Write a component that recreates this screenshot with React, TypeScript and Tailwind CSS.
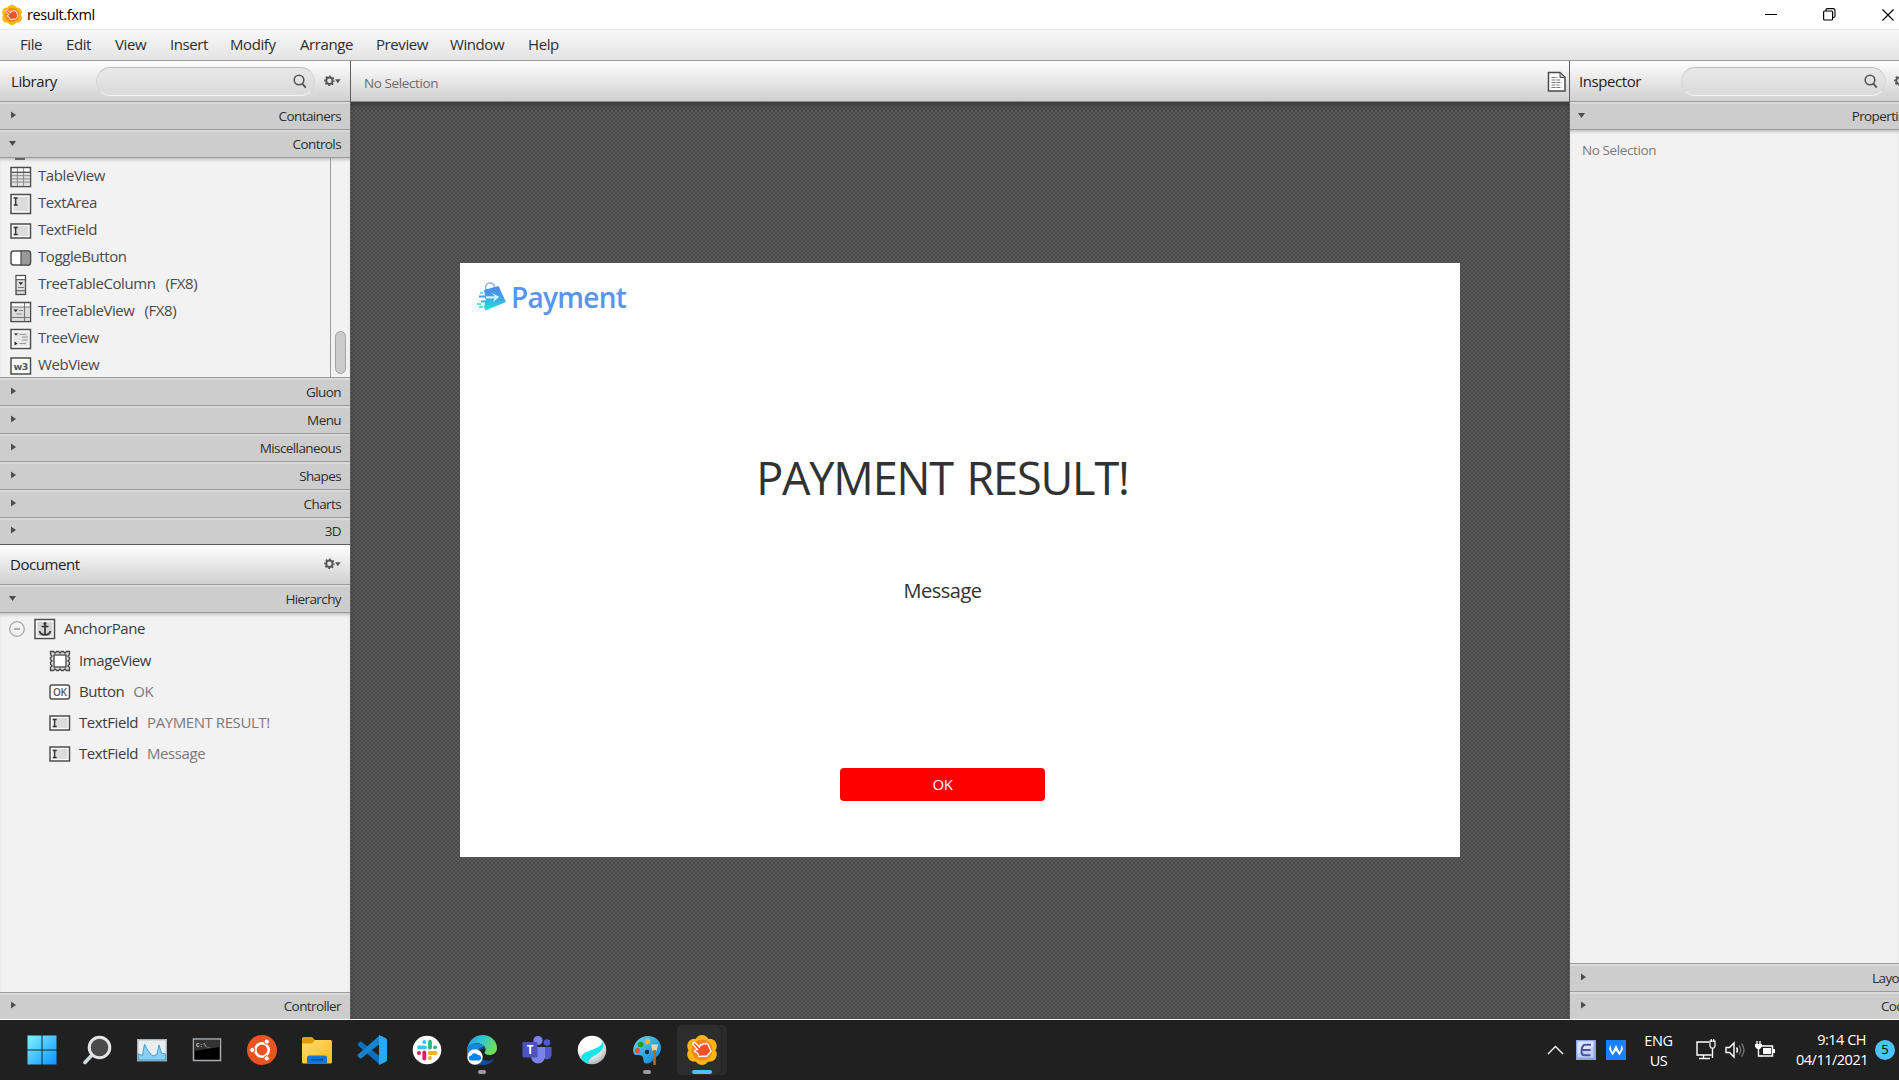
import React from "react";

type Kids = { children?: React.ReactNode };

const menus: [string, string][] = [
  ["File", "w-[46px]"],
  ["Edit", "w-[49px]"],
  ["View", "w-[55px]"],
  ["Insert", "w-[60px]"],
  ["Modify", "w-[70px]"],
  ["Arrange", "w-[76px]"],
  ["Preview", "w-[74px]"],
  ["Window", "w-[78px]"],
  ["Help", "w-[40px]"],
];

function Section({ label, open = false, last = false, wide = false }: { label: string; open?: boolean; last?: boolean; wide?: boolean }) {
  return (
    <div
      className={`flex shrink-0 items-center justify-between border-t border-[#9b9b9b] bg-[#cdcdcd] shadow-[inset_0_2px_0_#dadada] ${
        last ? "h-[27px]" : "h-7"
      } ${wide ? "w-[350px]" : "w-full"}`}
    >
      {open ? (
        <svg className={wide ? "ml-2" : "ml-[9px]"} width="8" height="8" viewBox="0 0 8 8">
          <path d="M0 1h7L3.5 6z" fill="#4d4d4d" />
        </svg>
      ) : (
        <svg className="mb-[2px] ml-[10px]" width="8" height="8" viewBox="0 0 8 8">
          <path d="M1 .5v7L6 4z" fill="#4d4d4d" />
        </svg>
      )}
      <span className="mr-[9px] text-[13.5px] leading-5 tracking-[-0.6px] text-[#2d2d2d]">{label}</span>
    </div>
  );
}

function Gear() {
  return (
    <svg width="17" height="12" viewBox="0 0 17 12" className="shrink-0">
      <circle cx="5.4" cy="5.8" r="3.2" fill="none" stroke="#555" strokeWidth="2" />
      <circle cx="5.4" cy="5.8" r="4.5" fill="none" stroke="#555" strokeWidth="1.6" strokeDasharray="1.8 1.734" strokeDashoffset=".9" />
      <path d="M11 4.3h5.6L13.8 8.3z" fill="#555" />
    </svg>
  );
}

function SearchField({ width }: { width: string }) {
  return (
    <div className={`flex h-[29px] shrink-0 items-center justify-end rounded-full border border-t-[#bfbfbf] border-r-[#d6d6d6] border-b-[#f4f4f4] border-l-[#d6d6d6] bg-linear-to-b from-[#e9e9e9] to-[#dadada] pr-[7px] ${width}`}>
      <svg width="14" height="15" viewBox="0 0 14 15">
        <circle cx="6" cy="6" r="4.8" fill="none" stroke="#555" strokeWidth="1.6" />
        <path d="M9.3 9.6l3.5 4" stroke="#555" strokeWidth="1.9" />
      </svg>
    </div>
  );
}

function Frame({ h = 20, children }: Kids & { h?: number }) {
  const y = (22 - h) / 2;
  return (
    <svg width="22" height="22" viewBox="0 0 22 22" className="shrink-0">
      <rect x="1" y={y + 0.5} width="19.5" height={h - 1} fill="#fff" stroke="#4d4d4d" strokeWidth="1.5" />
      {children}
    </svg>
  );
}

const IBeam = ({ y }: { y: number }) => (
  <path d={`M3.7 ${y}h4M3.7 ${y + 7}h4M5.7 ${y}v7`} stroke="#333" strokeWidth="1.3" />
);

const icons: Record<string, React.ReactNode> = {
  table: (
    <Frame>
      <path d="M2 6h17.5v13.5H2z" fill="#e2e2e2" />
      <path d="M2 6.5h18M2 9.7h18M2 12.9h18M2 16.1h18M7.4 2v18M13.6 2v18" stroke="#888" strokeWidth="1" />
      <path d="M2 6.2h18" stroke="#4d4d4d" strokeWidth="1.2" />
    </Frame>
  ),
  area: (
    <Frame>
      <path d="M3.5 3.8h15v14.4h-15z" fill="#dcdcdc" />
      <IBeam y={5} />
    </Frame>
  ),
  field: (
    <Frame h={15}>
      <path d="M3.5 6h15v10h-15z" fill="#dcdcdc" />
      <IBeam y={7.5} />
    </Frame>
  ),
  toggle: (
    <svg width="22" height="22" viewBox="0 0 22 22" className="shrink-0">
      <rect x="1" y="4" width="19.5" height="14" rx="2.5" fill="#fff" stroke="#4d4d4d" strokeWidth="1.5" />
      <path d="M11 4h7a2.5 2.5 0 0 1 2.5 2.5v9a2.5 2.5 0 0 1-2.5 2.5h-7z" fill="#999" stroke="#4d4d4d" strokeWidth="1.2" />
    </svg>
  ),
  column: (
    <svg width="22" height="22" viewBox="0 0 22 22" className="shrink-0">
      <rect x="6" y="1.5" width="9.5" height="19" fill="#ddd" stroke="#4d4d4d" strokeWidth="1.3" />
      <path d="M6.7 2.2h8v2.8h-8z" fill="#fff" />
      <path d="M6 5.7h9.5M6 16.8h9.5" stroke="#4d4d4d" />
      <path d="M8.5 8.3h4.5l-2.2 2.7z" fill="#222" />
      <path d="M8 13.5h6" stroke="#777" />
    </svg>
  ),
  treetable: (
    <Frame>
      <path d="M2 6h17.5v13.5H2z" fill="#dcdcdc" />
      <path d="M2 6h18M14.5 2v18M2 16.5h18" stroke="#777" strokeWidth="1.1" />
      <path d="M3.5 8.5H8L5.7 11z" fill="#222" />
      <path d="M9 9.5h4M6.5 13h5" stroke="#888" />
    </Frame>
  ),
  tree: (
    <Frame>
      <path d="M3.5 3.8h15v14.4h-15z" fill="#e6e6e6" />
      <path d="M4 5.5h4L6 7.5zM4.5 13.5l3 2-3 2z" fill="#222" />
      <path d="M9.5 6.5h7M12 9h6M12 12h6M9.5 15.5h6.5" stroke="#999" />
    </Frame>
  ),
  web: (
    <Frame h={17}>
      <text x="10.8" y="14.800" textAnchor="middle" fontFamily="DejaVu Sans, sans-serif" fontWeight="bold" fontSize="9.5" letterSpacing="-.5" fill="#555">w3</text>
    </Frame>
  ),
  anchor: (
    <Frame>
      <path d="M3.5 3.8h15v14.4h-15z" fill="#d5d5d5" />
      <path d="M11 6v11M7.5 8.500h7M5.500 13c.5 2.500 2.500 3.700 5.500 4 3-.3 5-1.500 5.500-4" fill="none" stroke="#333" strokeWidth="1.700" />
      <circle cx="11" cy="5.500" r="1.500" fill="#333" />
    </Frame>
  ),
  image: (
    <svg width="22" height="22" viewBox="0 0 22 22" className="shrink-0">
      <path d="M1.500 1.500h3l1.500 1.500 1.800-1.500h1.700l1.500 1.500 1.500-1.500h1.700L16 3l1.500-1.500h3v3L19 6l1.500 1.700v1.800L19 11l1.500 1.500v1.800L19 16l1.500 1.500v3h-3L16 19l-1.800 1.500h-1.700L11 19l-1.500 1.500H7.800L6 19l-1.500 1.500h-3v-3L3 16l-1.500-1.700v-1.800L3 11 1.500 9.500V7.700L3 6 1.500 4.500z" fill="#ddd" stroke="#444" strokeWidth="1.300" />
      <rect x="5" y="5" width="12" height="12" fill="#fff" stroke="#444" strokeWidth="1.300" />
    </svg>
  ),
  button: (
    <svg width="22" height="22" viewBox="0 0 22 22" className="shrink-0">
      <rect x="1" y="4" width="19.5" height="14" rx="2" fill="#fff" stroke="#4d4d4d" strokeWidth="1.5" />
      <text x="10.8" y="14.7" textAnchor="middle" fontFamily="Open Sans, sans-serif" fontWeight="600" fontSize="10" letterSpacing="-.3" fill="#555">OK</text>
    </svg>
  ),
};

const controls: [string, string, string?][] = [
  ["table", "TableView"],
  ["area", "TextArea"],
  ["field", "TextField"],
  ["toggle", "ToggleButton"],
  ["column", "TreeTableColumn", "(FX8)"],
  ["treetable", "TreeTableView", "(FX8)"],
  ["tree", "TreeView"],
  ["web", "WebView"],
];

const nodes: [string, string, string?][] = [
  ["image", "ImageView"],
  ["button", "Button", "OK"],
  ["field", "TextField", "PAYMENT RESULT!"],
  ["field", "TextField", "Message"],
];

const item = "text-[15px] leading-5 tracking-[-0.42px]";

function LibraryPanel() {
  return (
    <div className="flex w-[351px] shrink-0 flex-col border-r border-[#5c5c5c] bg-[#f2f2f2]">
      <div className="flex h-10 shrink-0 items-center bg-linear-to-b from-white to-[#d0d0d0]">
        <span className={`w-[86px] pl-[11px] text-[#222] ${item}`}>Library</span>
        <div className="pl-[10px]">
          <SearchField width="w-[219px]" />
        </div>
        <div className="pl-[9px]">
          <Gear />
        </div>
      </div>
      <Section label="Containers" />
      <Section label="Controls" open />
      <div className="flex h-[220px] shrink-0 overflow-hidden border-t border-[#9b9b9b] shadow-[inset_0_3px_3px_-1px_#c4c4c4]">
        <div className="flex w-[330px] flex-col">
          <div className="ml-[15px] h-[5px] w-[10px] shrink-0 border-b-[3px] border-transparent bg-[#666] bg-clip-padding" />
          {controls.map(([icon, name, tag]) => (
            <div key={name} className="flex h-[27px] shrink-0 items-center pl-[10px]">
              {icons[icon]}
              <span className={`pb-[3px] pl-[6px] text-[#4a4a4a] ${item}`}>{name}</span>
              {tag && <span className={`pb-[3px] pl-[10px] text-[#4a4a4a] ${item}`}>{tag}</span>}
            </div>
          ))}
        </div>
        <div className="flex flex-1 items-end justify-center border-l border-[#9b9b9b] pb-[3px]">
          <div className="h-[43px] w-[11px] rounded-full border border-[#a3a3a3] bg-[#cbcbcb]" />
        </div>
      </div>
      <Section label="Gluon" />
      <Section label="Menu" />
      <Section label="Miscellaneous" />
      <Section label="Shapes" />
      <Section label="Charts" />
      <Section label="3D" last />
      <div className="flex h-10 shrink-0 items-center justify-between border-t border-[#5c5c5c] bg-linear-to-b from-white to-[#d0d0d0] pr-[9px] pb-px">
        <span className={`pb-px pl-[10px] text-[#222] ${item}`}>Document</span>
        <Gear />
      </div>
      <Section label="Hierarchy" open />
      <div className="flex-1 border-t border-[#9b9b9b] shadow-[inset_0_3px_3px_-1px_#c4c4c4]">
        <div className="flex h-8 items-center pl-[9px]">
          <svg width="16" height="16" viewBox="0 0 16 16">
            <circle cx="8" cy="8" r="7.300" fill="none" stroke="#a8a8a8" strokeWidth="1.300" />
            <path d="M5 8h6" stroke="#999" strokeWidth="1.500" />
          </svg>
          <div className="pl-[9px]">{icons.anchor}</div>
          <span className={`pb-[2px] pl-[8px] text-[#3c3c3c] ${item}`}>AnchorPane</span>
        </div>
        {nodes.map(([icon, name, value], i) => (
          <div key={i} className="flex h-[31px] items-center pl-[49px]">
            {icons[icon]}
            <span className={`pb-[2px] pl-[8px] text-[#3c3c3c] ${item}`}>{name}</span>
            {value && <span className={`pb-[2px] pl-[9px] text-[#7a7a7a] ${item}`}>{value}</span>}
          </div>
        ))}
      </div>
      <Section label="Controller" last />
    </div>
  );
}

function PaymentLogo() {
  return (
    <div className="flex items-center">
      <svg width="30" height="30" viewBox="0 0 30 30">
        <defs>
          <linearGradient id="bag" x1="0" y1="0" x2="0" y2="1">
            <stop offset="0" stopColor="#4f86e8" />
            <stop offset=".5" stopColor="#3fa5ea" />
            <stop offset="1" stopColor="#18ecd8" />
          </linearGradient>
        </defs>
        <path d="M9 8C7.500 3 10 1 13 1s4.500 2 4.500 5" fill="none" stroke="#8db2f2" strokeWidth="1.500" />
        <path d="M7 8l14.500-4L29 20 8.500 28.500l-1.500-3 1-5H4v-2h5l-1-3H2v-2h6z" fill="url(#bag)" />
        <path d="M9 14.200h9l-4-3.500 8.500 4L16 20l1.500-3.500H9" fill="#c9f6fb" />
        <path d="M0 22h4M2 25h4M3 11h3" stroke="#2cd5e2" strokeWidth="1.500" />
      </svg>
      <span className="pl-1 text-[28px] font-semibold leading-8 tracking-[-0.7px] text-[#5896ea]">Payment</span>
    </div>
  );
}

function Canvas() {
  return (
    <div className="flex min-w-0 flex-1 flex-col">
      <div className="flex h-[41px] shrink-0 items-center justify-between border-b border-[#8a8a8a] bg-linear-to-b from-white to-[#d0d0d0] pr-[2px]">
        <span className="pl-[13px] pt-[3px] text-[13.5px] leading-5 tracking-[-0.4px] text-[#6d6d6d]">No Selection</span>
        <svg className="mt-[2px]" width="20" height="22" viewBox="0 0 20 22">
          <path d="M1.500 1.500h11.500l5 5v13.500H1.500z" fill="#fff" stroke="#4a4a4a" strokeWidth="1.500" />
          <path d="M13 1.500v5h5z" fill="#ccc" stroke="#4a4a4a" />
          <path d="M4.500 6.500h6M4.500 9h9M4.500 11.500h10M4.500 14h8M4.500 16.500h10" stroke="#777" strokeDasharray="4 .8" />
        </svg>
      </div>
      <div className="flex flex-1 justify-center bg-[#505050] bg-[repeating-conic-gradient(#474747_0_25%,#5b5b5b_0_50%)] bg-size-[4px_4px] pt-[161px] shadow-[inset_0_4px_4px_-1px_#3a3a3a]">
        <div className="flex h-[594px] w-[1000px] flex-col bg-white pl-[17px] pt-[18px]">
          <PaymentLogo />
          <div className="flex w-[931px] flex-col items-center">
            <div className="mt-[135px] text-[45px] leading-[60px] tracking-[-1.15px] text-[#323232] [word-spacing:3px]">PAYMENT RESULT!</div>
            <div className="mt-[69px] text-[20px] leading-7 tracking-[-0.5px] text-[#323232]">Message</div>
            <div className="mt-[163px] flex h-[33px] w-[205px] items-center justify-center rounded-[4px] bg-[#ff0000] pb-px text-[15px] tracking-[-0.4px] text-white">OK</div>
          </div>
        </div>
      </div>
    </div>
  );
}

function Inspector() {
  return (
    <div className="flex w-[330px] shrink-0 flex-col overflow-hidden border-l border-[#5c5c5c] bg-[#f2f2f2]">
      <div className="flex h-10 w-[360px] shrink-0 items-center bg-linear-to-b from-white to-[#d0d0d0]">
        <span className={`w-[111px] pl-[9px] text-[#222] ${item}`}>Inspector</span>
        <SearchField width="w-[205px]" />
        <div className="pl-2">
          <Gear />
        </div>
      </div>
      <Section label="Properties" open wide />
      <div className="flex-1 border-t border-[#9b9b9b] px-3 pt-[7px] shadow-[inset_0_3px_3px_-1px_#c4c4c4]">
        <span className="text-[13.5px] leading-5 tracking-[-0.4px] text-[#7a7a7a]">No Selection</span>
      </div>
      <Section label="Layout" wide />
      <Section label="Code" wide />
    </div>
  );
}

const Flower = ({ size }: { size: number }) => (
  <svg width={size} height={size} viewBox="0 0 30 30">
    <g fill="#fdb515">
      <circle cx="15" cy="7" r="7" />
      <circle cx="15" cy="23" r="7" />
      <circle cx="7.500" cy="11" r="7.300" />
      <circle cx="22.500" cy="11" r="7.300" />
      <circle cx="7.500" cy="19.500" r="7.300" />
      <circle cx="22.500" cy="19.500" r="7.300" />
    </g>
    <circle cx="15" cy="15" r="10.500" fill="#f7861f" />
    <path d="M6 9.500c-.5-1.500 1-2.500 2.200-1.600L12.500 12l1-2.500 2 .3.800-1.300 2 .6 1-.8 1.700 1.200 3 7-4 4.500-8 .5-1.500-3.500-3-1.500 1-1.500 2-.5z" fill="#f4512c" stroke="#fff" strokeWidth="1.300" />
  </svg>
);

const apps: { name: string; mark?: "idle" | "active"; art: React.ReactNode }[] = [
  {
    name: "start",
    art: (
      <svg width="30" height="30" viewBox="0 0 30 30">
        <defs>
          <linearGradient id="win" x1="0" y1="0" x2="1" y2="1">
            <stop offset="0" stopColor="#80f4ff" />
            <stop offset="1" stopColor="#0a93ff" />
          </linearGradient>
        </defs>
        <path d="M.500.500h14v14H.500zM15.500.500h14v14h-14zM.500 15.500h14v14H.500zM15.500 15.500h14v14h-14z" fill="url(#win)" />
      </svg>
    ),
  },
  {
    name: "search",
    art: (
      <svg width="30" height="30" viewBox="0 0 30 30">
        <path d="M10.500 19.500L3 27.500" stroke="#d5dadd" strokeWidth="3.600" strokeLinecap="round" />
        <circle cx="17.500" cy="12.500" r="10.300" fill="#4a4a4a" stroke="#e2e4e6" strokeWidth="3" />
      </svg>
    ),
  },
  {
    name: "monitor",
    art: (
      <svg width="30" height="30" viewBox="0 0 30 30">
        <rect x=".7" y="4.700" width="28.600" height="21" fill="#e9eef2" stroke="#aab4bb" strokeWidth="1.400" />
        <path d="M1.500 19l4 1.500L7.500 9l3 6 4 5 2.500 1 3-2 2-9 2.500 8 4 1v6H1.500z" fill="#8ccdf5" stroke="#3fa0e0" />
      </svg>
    ),
  },
  {
    name: "terminal",
    art: (
      <svg width="30" height="30" viewBox="0 0 30 30">
        <rect x="1.500" y="4" width="27" height="21.500" fill="#000" stroke="#a9adb0" strokeWidth="1.500" />
        <path d="M2.500 5h25v7L2.500 16z" fill="#333" />
        <text x="4" y="11.500" fontFamily="Liberation Mono, monospace" fontWeight="bold" fontSize="6" fill="#ccc">C:\_</text>
      </svg>
    ),
  },
  {
    name: "ubuntu",
    art: (
      <svg width="30" height="30" viewBox="0 0 30 30">
        <circle cx="15" cy="15" r="15" fill="#e95420" />
        <circle cx="15" cy="15" r="6.700" fill="none" stroke="#fff" strokeWidth="2.600" />
        <g fill="#fff" stroke="#e95420" strokeWidth="1">
          <circle cx="5.300" cy="15" r="2.600" />
          <circle cx="19.700" cy="6.600" r="2.600" />
          <circle cx="19.700" cy="23.400" r="2.600" />
        </g>
      </svg>
    ),
  },
  {
    name: "files",
    art: (
      <svg width="30" height="30" viewBox="0 0 30 30">
        <defs>
          <linearGradient id="folder" x1="0" y1="0" x2="1" y2="1">
            <stop offset="0" stopColor="#ffdc70" />
            <stop offset="1" stopColor="#fdb918" />
          </linearGradient>
        </defs>
        <path d="M0 10V3.500Q0 2 1.500 2H10l3 3h8v5z" fill="#e09f08" />
        <path d="M0 8.500h10L13 5h15.500Q30 5 30 6.500V27q0 1.500-1.500 1.500h-27Q0 28.500 0 27z" fill="url(#folder)" />
        <path d="M5 28.500V23q0-2.500 2.500-2.500h15Q25 20.500 25 23v5.500z" fill="#0f78d0" />
        <path d="M9 24.700h12" stroke="#0a4a90" strokeWidth="1.500" />
      </svg>
    ),
  },
  {
    name: "code",
    art: (
      <svg width="30" height="30" viewBox="0 0 30 30">
        <path d="M1 8.500l2-1.700q.8-.5 1.700.2L22.500 21v8.500L1 10.500q-.8-1 0-2z" fill="#0a6fbf" />
        <path d="M1 21.500l2 1.700q.8.500 1.700-.2L22.500 9V.5L1 19.500q-.8 1 0 2z" fill="#1584d0" />
        <path d="M22 0l6.500 3q1.500.8 1.500 2v20q0 1.200-1.500 2L22 30z" fill="#2aa8f2" />
      </svg>
    ),
  },
  {
    name: "slack",
    art: (
      <svg width="30" height="30" viewBox="0 0 30 30">
        <circle cx="15" cy="15" r="14.300" fill="#fff" />
        <g strokeWidth="3.800" strokeLinecap="round">
          <path d="M7 12.300h6M12.300 7v.2" stroke="#36c5f0" />
          <path d="M18 6.700v6M23 12.300h.2" stroke="#2eb67d" />
          <path d="M17.700 18h6M18 23v.2" stroke="#ecb22e" />
          <path d="M12.300 17.500v6M6.900 18h.2" stroke="#e01e5a" />
        </g>
      </svg>
    ),
  },
  {
    name: "edge",
    mark: "idle",
    art: (
      <svg width="30" height="30" viewBox="0 0 30 30">
        <defs>
          <linearGradient id="edge" x1="0" y1="0" x2="1" y2=".4">
            <stop offset="0" stopColor="#1b9be0" />
            <stop offset=".5" stopColor="#32c3d2" />
            <stop offset="1" stopColor="#6be05a" />
          </linearGradient>
        </defs>
        <path d="M0 14C2 5 8 0 15.500 0 24 0 30 6 30 13c0 4.500-3.500 7-7.500 7-3 0-5-1-5-2.200 0-.8 1.500-1.500 1-4C18 10.500 14 8.500 10 8.500 6 8.500 3 10 0 14z" fill="url(#edge)" />
        <path d="M0 15C0 11 4 8.500 9 8.500c5 0 9 2.500 9.500 5.500-6-1.500-7 3-5.500 7 1.800 4.500 8 6.500 14 3C25 28 21 30 15 30 6 30 0 24 0 15z" fill="#114f98" />
        <path d="M0 15c0-4 4-6.500 9-6.500 3.500 0 6.500 1.200 8.200 3C11 12 8.500 18 12 24l-7 3C1.500 24 0 20 0 15z" fill="#1787dc" />
        <circle cx="8" cy="22" r="7.700" fill="#fff" />
        <path d="M4.500 25.500a2.500 2.500 0 0 1-.3-5A4 4 0 0 1 11 20a2.800 2.800 0 0 1 1 5.500z" fill="#0b84ee" />
      </svg>
    ),
  },
  {
    name: "teams",
    art: (
      <svg width="30" height="30" viewBox="0 0 30 30">
        <circle cx="25" cy="7.500" r="3.300" fill="#5059c9" />
        <circle cx="16" cy="5.500" r="4.600" fill="#7b83eb" />
        <path d="M20 12h9.500v8.500a4.800 4.800 0 0 1-7.500 3z" fill="#5059c9" />
        <path d="M9 12h14v9.500a7 7 0 0 1-14 0z" fill="#7b83eb" />
        <rect x=".5" y="7" width="15" height="15.500" rx="1.200" fill="#4b53bc" />
        <text x="8" y="19" textAnchor="middle" fontFamily="Open Sans, sans-serif" fontWeight="700" fontSize="11.500" fill="#fff">T</text>
      </svg>
    ),
  },
  {
    name: "swirl",
    art: (
      <svg width="30" height="30" viewBox="0 0 30 30">
        <defs>
          <radialGradient id="ball" cx=".4" cy=".3" r=".75">
            <stop offset=".5" stopColor="#fff" />
            <stop offset="1" stopColor="#a9a9a9" />
          </radialGradient>
        </defs>
        <circle cx="15" cy="15" r="14.300" fill="url(#ball)" />
        <path d="M26 5.500c-1 6-5 6.500-9 8.500C11 16.500 5 17 4 23.500c2 3 4.500 4.500 7 5.300C11 22 20 20.500 24 16c3-3.500 3.500-7 2-10.500z" fill="#14e6e8" />
      </svg>
    ),
  },
  {
    name: "paint",
    mark: "idle",
    art: (
      <svg width="30" height="30" viewBox="0 0 30 30">
        <defs>
          <linearGradient id="palette" x1="0" y1="0" x2="1" y2="1">
            <stop offset="0" stopColor="#5fd6f7" />
            <stop offset="1" stopColor="#0b80cf" />
          </linearGradient>
        </defs>
        <path d="M16 1C24 1 29 6.500 29 13c0 6-4 8-7 11-2 3-5 5-8 4.500-4-.7-1.500-5.500-4-7.500-3-1.500-6 0-8-2C-1.500 12 6 1 16 1z" fill="url(#palette)" />
        <circle cx="8.500" cy="9.500" r="2.800" fill="#2c9a22" />
        <circle cx="15.500" cy="6.500" r="2.700" fill="#fbbc10" />
        <circle cx="5.500" cy="15.500" r="2.600" fill="#e2572b" />
        <circle cx="15" cy="17" r="2.200" fill="#1e2b33" />
        <path d="M19 9.500h7l-1.500 6.500h-4z" fill="#eed3ac" />
        <path d="M22.500 15v15" stroke="#b76a1c" strokeWidth="2.600" />
      </svg>
    ),
  },
  { name: "builder", mark: "active", art: <Flower size={30} /> },
];

function Taskbar() {
  return (
    <div className="flex h-[61px] shrink-0 items-stretch justify-between border-t border-white bg-[#202020] text-white">
      <div className="flex pl-[14px]">
        {apps.map(({ name, art, mark }) => (
          <div key={name} className="flex w-[55px] flex-col items-center">
            <div
              className={
                mark === "active"
                  ? "mt-[5px] mr-[5px] flex h-[50px] w-[44px] flex-col items-center rounded-[5px] bg-[#2d2d2d] pt-[10px] pl-[6px] shadow-[1px_0_0_#202020,6px_0_0_#2b2b2b]"
                  : "mt-[5px] flex h-[50px] w-[49px] flex-col items-center pt-[10px]"
              }
            >
              {art}
              {mark === "idle" && <div className="mt-[5px] h-1 w-2 rounded-full bg-[#9d9d9d]" />}
              {mark === "active" && <div className="mt-[5px] h-1 w-5 rounded-full bg-[#4cc2ff]" />}
            </div>
          </div>
        ))}
      </div>
      <div className="flex items-center">
        <svg width="17" height="10" viewBox="0 0 17 10">
          <path d="M1 9l7.500-7.500L16 9" fill="none" stroke="#fff" strokeWidth="1.300" />
        </svg>
        <svg className="ml-3" width="20" height="20" viewBox="0 0 20 20">
          <rect width="20" height="20" fill="#8ba6ea" />
          <path d="M1.500 1.500h16v16h-16z" fill="#c3cff4" />
          <path d="M1.500 1.500h16v5L1.500 14z" fill="#dfe6fb" />
          <path d="M15 4.700H9Q6.200 5 5.600 10q-.5 5 2.400 5.300h6.500M6 10h8.500" fill="none" stroke="#4a5399" strokeWidth="2" />
        </svg>
        <svg className="ml-[10px]" width="20" height="20" viewBox="0 0 20 20">
          <rect width="20" height="20" fill="#1a80ff" />
          <path d="M4.200 5L5.500 8.500 3 9zM3 9l1.800-.5L6.500 12 9 7l1-2 1 2 2.500 5 1.700-3.500L17 9l-3.500 6.500L10 10.500 6.500 15.500z" fill="#fff" />
          <path d="M15.800 5l-1.300 3.500L17 9z" fill="#fff" />
        </svg>
        <div className="ml-[15px] w-[35px] pt-px text-center text-[14.5px] leading-5 tracking-[-0.4px]">
          ENG
          <br />
          US
        </div>
        <svg className="ml-[19px]" width="22" height="22" viewBox="0 0 22 22">
          <path d="M14 3H2v13h14.500M8.500 16v3.500M4 19.500h11M17.500 9v10" fill="none" stroke="#fff" strokeWidth="1.400" />
          <path d="M15 2h5v5l-1 2h-3l-1-2zM16.300 0v3M18.700 0v3" fill="#202020" stroke="#fff" strokeWidth="1.200" />
        </svg>
        <svg className="ml-2" width="21" height="18" viewBox="0 0 21 18">
          <path d="M1 6.500h3.500L9 2v14l-4.500-4.500H1z" fill="none" stroke="#fff" strokeWidth="1.400" />
          <path d="M11.500 6.500q2 2.500 0 5" fill="none" stroke="#fff" strokeWidth="1.400" />
          <path d="M14 4.500q3.500 4.500 0 9M16.500 2.500q5 6.500 0 13" fill="none" stroke="#777" strokeWidth="1.300" />
        </svg>
        <svg className="mb-px ml-[9px]" width="21" height="17" viewBox="0 0 21 17">
          <path d="M6 5h11.500v10H6" fill="none" stroke="#fff" strokeWidth="1.500" />
          <path d="M8 7h8v6H8zM18 8h2v4h-2z" fill="#fff" />
          <path d="M2 0v3M5 0v3M3.500 7v8H7" stroke="#fff" strokeWidth="1.400" fill="none" />
          <path d="M0 3h7v2.500L5 8H2L0 5.500z" fill="#fff" />
        </svg>
        <div className="ml-[20px] w-[70px] whitespace-nowrap text-right text-[14.5px] leading-5 tracking-[-0.5px]">
          9:14 CH
          <br />
          04/11/2021
        </div>
        <div className="mr-1 ml-[9px] flex size-5 items-center justify-center rounded-full bg-[#4cc2ff] text-[13px] text-black">5</div>
      </div>
    </div>
  );
}

export default function App() {
  return (
    <div className="flex h-[1080px] w-[1899px] flex-col overflow-hidden bg-[#f2f2f2] font-['Open_Sans',sans-serif]">
      <div className="flex h-[29px] shrink-0 items-center justify-between bg-white">
        <div className="flex items-center pl-[2px]">
          <Flower size={20} />
          <span className="pl-[5px] text-[14.5px] leading-5 tracking-[-0.4px] text-black">result.fxml</span>
        </div>
        <div className="flex items-center">
          <svg className="mr-[46px]" width="12" height="12" viewBox="0 0 12 12">
            <path d="M0 5.500h12" stroke="#000" />
          </svg>
          <svg className="mr-[46px]" width="13" height="13" viewBox="0 0 13 13">
            <rect x=".6" y="3" width="9" height="9" rx="1" fill="none" stroke="#000" strokeWidth="1.200" />
            <path d="M3 3V2Q3 .6 4.500.6H10q2 0 2 2V8q0 1.500-1.500 1.500h-1" fill="none" stroke="#000" strokeWidth="1.100" />
          </svg>
          <svg className="mr-[5px]" width="12" height="12" viewBox="0 0 12 12">
            <path d="M.5.5l11 11M11.500.5l-11 11" stroke="#000" strokeWidth="1.200" />
          </svg>
        </div>
      </div>
      <div className="flex h-8 shrink-0 items-center border-t border-b border-t-[#e8e8e8] border-b-[#9b9b9b] bg-linear-to-b from-[#f8f8f8] to-[#e4e4e4] pb-[2px] pl-5">
        {menus.map(([label, width]) => (
          <span key={label} className={`text-[#2e2e2e] ${item} ${width}`}>
            {label}
          </span>
        ))}
      </div>
      <div className="flex min-h-0 flex-1">
        <LibraryPanel />
        <Canvas />
        <Inspector />
      </div>
      <Taskbar />
    </div>
  );
}
